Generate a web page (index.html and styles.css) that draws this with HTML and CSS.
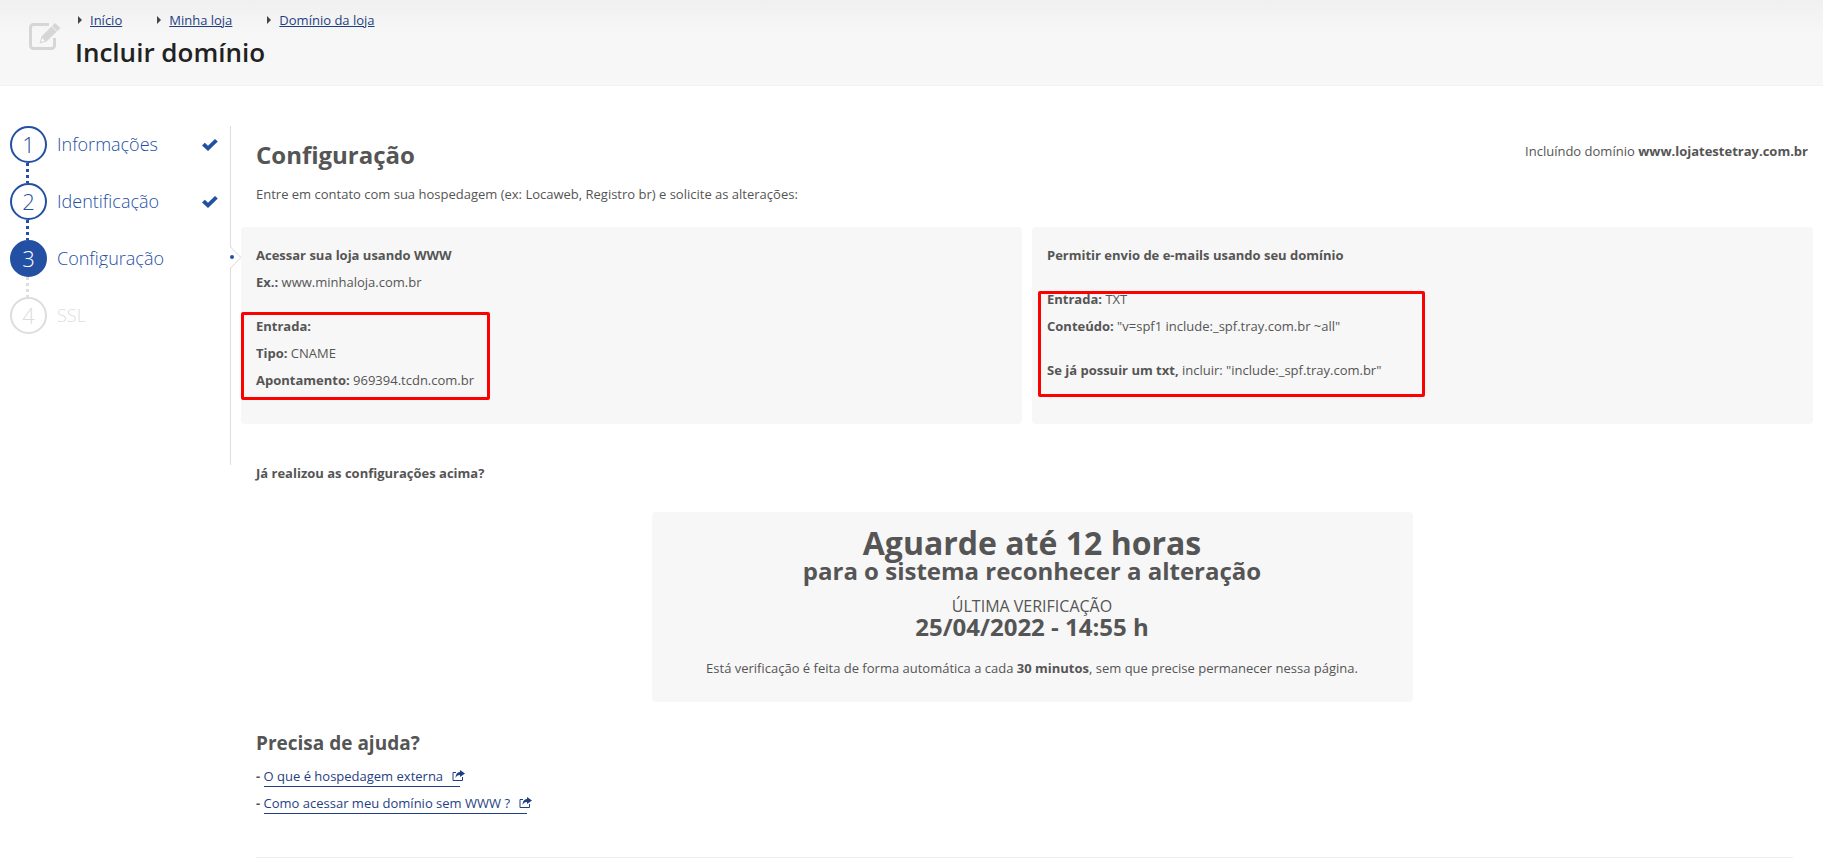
FILE: index.html
```
<!DOCTYPE html>
<html lang="pt-BR">
<head>
<meta charset="utf-8">
<title>Incluir domínio</title>
<link rel="stylesheet" href="styles.css">
</head>
<body>
<header class="page-header">
  <svg class="header-icon" viewBox="0 0 32 29" aria-hidden="true">
    <path d="M21 2.500H5.500A3 3 0 0 0 2.500 5.500V23.500A3 3 0 0 0 5.500 26.500H23.500A3 3 0 0 0 26.500 23.500V16" fill="none" stroke="#d6d6d6" stroke-width="3"/>
    <path d="M27 1L32.500 6L18.500 19.500L11.500 21.500L13.500 14.500Z" fill="#d6d6d6"/>
    <path d="M14.300 16L17 18.700L13.500 20L13 19.500Z" fill="#f7f7f7"/>
    <path d="M23.500 4L29 9.500" stroke="#f7f7f7" stroke-width="1"/>
  </svg>
  <div>
    <nav class="breadcrumb" aria-label="Navegação">
      <a href="#">Início</a>
      <a href="#">Minha loja</a>
      <a href="#">Domínio da loja</a>
    </nav>
    <h1 class="page-title">Incluir domínio</h1>
  </div>
</header>
<div class="layout">
  <aside class="sidebar">
    <ol class="steps">
      <li class="step done"><span class="step-number">1</span><span class="step-label">Informações</span>
        <svg class="check" viewBox="0 0 16 12" aria-hidden="true"><path d="M0 6.500L2.800 3.800L6 6.800L13 0L15.800 2.600L6 12Z"/></svg></li>
      <li class="step done"><span class="step-number">2</span><span class="step-label">Identificação</span>
        <svg class="check" viewBox="0 0 16 12" aria-hidden="true"><path d="M0 6.500L2.800 3.800L6 6.800L13 0L15.800 2.600L6 12Z"/></svg></li>
      <li class="step current"><span class="step-number">3</span><span class="step-label">Configuração</span>
        <svg class="notch" viewBox="0 0 12 23" aria-hidden="true"><path class="notch-gap" d="M0 1H1V22H0Z"/><path class="notch-line" d="M.5 0V1L11 11.500L.5 22V23"/><circle cx="2" cy="11" r="2"/></svg></li>
      <li class="step pending"><span class="step-number">4</span><span class="step-label">SSL</span></li>
    </ol>
  </aside>
  <main class="content">
    <div class="content-head">
      <h2 class="section-title">Configuração</h2>
      <p>Incluíndo domínio <strong>www.lojatestetray.com.br</strong></p>
    </div>
    <p class="intro">Entre em contato com sua hospedagem (ex: Locaweb, Registro br) e solicite as alterações:</p>
    <div class="panels">
      <section class="panel">
        <div class="group">
          <h3 class="panel-title">Acessar sua loja usando WWW</h3>
          <p><strong>Ex.:</strong> www.minhaloja.com.br</p>
        </div>
        <div class="group">
          <p><strong>Entrada:</strong></p>
          <p><strong>Tipo:</strong> CNAME</p>
          <p><strong>Apontamento:</strong> 969394.tcdn.com.br</p>
        </div>
        <span class="highlight highlight-cname"></span>
      </section>
      <section class="panel">
        <h3 class="panel-title">Permitir envio de e-mails usando seu domínio</h3>
        <div class="group">
          <p><strong>Entrada:</strong> TXT</p>
          <p><strong>Conteúdo:</strong> "v=spf1 include:_spf.tray.com.br ~all"</p>
        </div>
        <p><strong>Se já possuir um txt,</strong> incluir: "include:_spf.tray.com.br"</p>
        <span class="highlight highlight-txt"></span>
      </section>
    </div>
    <p class="question"><strong>Já realizou as configurações acima?</strong></p>
    <div class="status-row">
      <section class="status">
        <p class="status-title">Aguarde até 12 horas</p>
        <p class="status-subtitle">para o sistema reconhecer a alteração</p>
        <p class="status-caption">ÚLTIMA VERIFICAÇÃO</p>
        <p class="status-date">25/04/2022 - 14:55 h</p>
        <p>Está verificação é feita de forma automática a cada <strong>30 minutos</strong>, sem que precise permanecer nessa página.</p>
      </section>
    </div>
    <section class="help">
      <h3 class="help-title">Precisa de ajuda?</h3>
      <ul class="help-list">
        <li><strong>-</strong> <a href="#">O que é hospedagem externa<svg class="external" viewBox="0 0 13 11" aria-hidden="true"><path d="M4 2.500H1V10.500H10.500V7" fill="none" stroke="currentColor"/><path d="M8 0L13 3.500L8 7V5C5.500 5 4.500 6 3.500 8C3.500 4.500 5 2.300 8 2Z" fill="currentColor"/></svg></a></li>
        <li><strong>-</strong> <a href="#">Como acessar meu domínio sem WWW ?<svg class="external" viewBox="0 0 13 11" aria-hidden="true"><path d="M4 2.500H1V10.500H10.500V7" fill="none" stroke="currentColor"/><path d="M8 0L13 3.500L8 7V5C5.500 5 4.500 6 3.500 8C3.500 4.500 5 2.300 8 2Z" fill="currentColor"/></svg></a></li>
      </ul>
    </section>
  </main>
</div>
</body>
</html>
```
FILE: styles.css
```
* { box-sizing: border-box; }
body {
  margin: 0;
  padding-right: 6px;
  background: #fff;
  color: #555;
  font: 13px/27px "Open Sans", sans-serif;
}
h1, h2, h3, p, ol, ul { margin: 0; padding: 0; }
ol, ul { list-style: none; }
a { color: #1f3f83; }

.page-header {
  display: flex;
  gap: 15px;
  height: 86px;
  padding: 10px 28px;
  background: linear-gradient(#f0f0f0, #f7f7f7 36px);
  border-bottom: 1px solid #f3f3f3;
}
.header-icon { width: 32px; height: 29px; margin-top: 12px; overflow: visible; }
.breadcrumb { display: flex; gap: 32px; line-height: 20px; }
.breadcrumb a { display: flex; align-items: center; }
.breadcrumb a::before {
  content: "";
  margin: 0 8px 0 3px;
  border: 4px solid transparent;
  border-left-color: #444;
  border-right: 0;
}
.page-title { color: #222; font-size: 26px; font-weight: 600; line-height: 44px; }

.layout { display: grid; grid-template-columns: 231px minmax(0, 1fr); gap: 10px; padding: 40px 10px 0 0; }
.sidebar { height: 339px; padding-left: 10px; border-right: 1px solid #ddd; }
.steps { display: grid; gap: 20px; }
.step {
  position: relative;
  display: flex;
  align-items: center;
  gap: 10px;
  padding-right: 12px;
  color: #2450a4;
  font-size: 18px;
  font-weight: 300;
}
.step-number {
  width: 37px;
  height: 37px;
  border: 2px solid currentColor;
  border-radius: 50%;
  font-size: 22px;
  line-height: 32px;
  text-align: center;
}
.step-label { flex: 1; padding-bottom: 2px; line-height: 16px; overflow: hidden; }
.current .step-number { background: #2450a4; border-color: #2450a4; color: #fff; }
.pending { color: #ddd; }
.step + .step::before {
  content: "";
  position: absolute;
  bottom: 100%;
  left: 16px;
  width: 3px;
  height: 20px;
  background: repeating-linear-gradient(currentColor 0 3px, transparent 3px 6px);
}
.check { width: 16px; height: 12px; fill: #2450a4; }
.notch { position: absolute; top: 6px; right: -12px; width: 12px; height: 23px; fill: #2450a4; }
.notch-gap { fill: #fff; }
.notch-line { fill: #fff; stroke: #d6d6d6; }

.content-head { display: flex; justify-content: space-between; padding: 12px 5px 0 15px; }
.section-title { font-size: 24px; font-weight: 700; line-height: 34px; }
.intro { padding: 9px 15px 19px; }
.panels { display: grid; grid-template-columns: 1fr 1fr; gap: 10px; }
.panel { position: relative; padding: 15px 15px 30px; background: #f7f7f7; border-radius: 4px; }
.panel-title { font-size: 13px; font-weight: 700; }
.group + .group, .panel-title + .group, .group + p { margin-top: 17px; }
.highlight { position: absolute; border: 3px solid #f00; border-radius: 2px; }
.highlight-cname { top: 85px; left: 0; width: 249px; height: 88px; }
.highlight-txt { top: 64px; left: 6px; width: 387px; height: 106px; }
.question { padding: 36px 15px 25px; }
.status-row { padding-left: 10px; }
.status {
  width: 761px;
  max-width: 100%;
  min-height: 190px;
  margin: 0 auto;
  padding: 15px 20px;
  background: #f7f7f7;
  border-radius: 4px;
  text-align: center;
}
.status-title { font-size: 32px; font-weight: 700; line-height: 32px; }
.status-subtitle { margin-bottom: 14px; font-size: 24px; font-weight: 700; line-height: 24px; }
.status-caption { font-size: 16px; line-height: 18px; }
.status-date { margin-bottom: 16px; font-size: 24px; font-weight: 700; line-height: 24px; }
.help { margin: 0 20px 0 15px; padding: 25px 0 40px; border-bottom: 1px solid #eee; }
.help-title { margin-bottom: 4px; font-size: 19px; font-weight: 700; line-height: 32px; }
.help-list { font-size: 13px; }
.help-list a { padding-bottom: 1px; border-bottom: 1px solid #1f3f83; text-decoration: none; }
.external { width: 13px; height: 11px; margin: 0 -5px 0 9px; }
```
